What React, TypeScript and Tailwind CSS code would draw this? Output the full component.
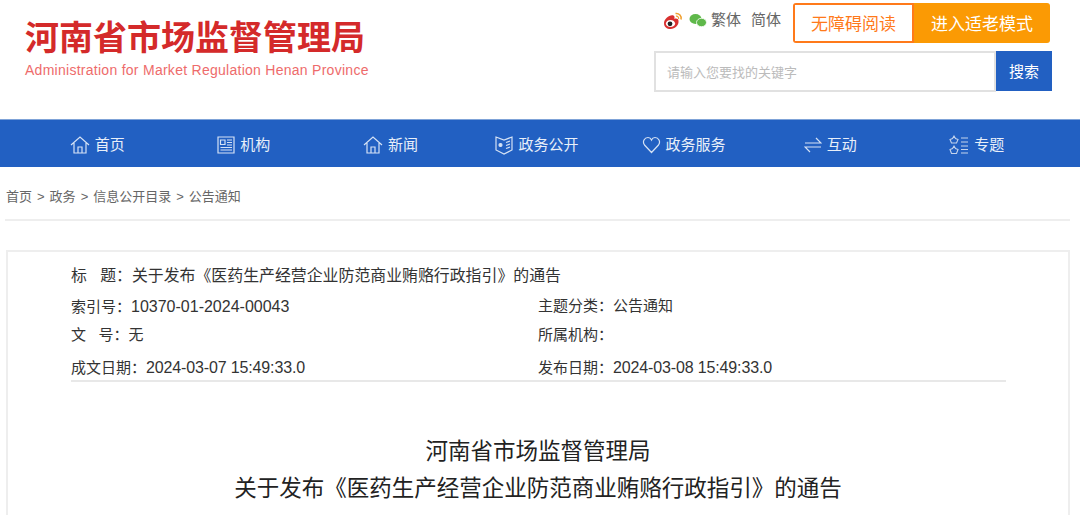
import type { ReactNode } from "react";

const navItems = ["首页", "机构", "新闻", "政务公开", "政务服务", "互动", "专题"];

function HomeIcon() {
  return (
    <svg width="20" height="20" viewBox="0 0 20 20" fill="none" stroke="#d5e2f5" strokeWidth="1.2">
      <path d="M1 10 L10 2 L19 10 M4 8 V18 H16 V8 M8 18 V12 H12 V18" />
    </svg>
  );
}

function NewsIcon() {
  return (
    <svg width="18" height="18" viewBox="0 0 18 18" fill="none" stroke="#d5e2f5" strokeWidth="1.2">
      <path d="M1 1 H17 V17 H1 Z M3.5 4 H8 V8.5 H3.5 Z M10 4 H15 M10 6.5 H15 M10 9 H15 M3.5 11.5 H15 M3.5 14 H15" />
    </svg>
  );
}

function BookIcon() {
  return (
    <svg width="18" height="20" viewBox="0 0 18 20" fill="none" stroke="#d5e2f5" strokeWidth="1.2">
      <path d="M1 2 L9 5 L17 2 V15 L9 19 L1 15 Z M11 7.5 L15 6 M11 10.5 L15 9 M11 13.5 L15 12" />
      <circle cx="5.5" cy="10" r="1.5" fill="#d5e2f5" />
    </svg>
  );
}

function HeartIcon() {
  return (
    <svg width="19" height="18" viewBox="0 0 19 18" fill="none" stroke="#d5e2f5" strokeWidth="1.2">
      <path d="M9.5 16.5 L2.5 9 C0 5.5 2.5 1.5 6 1.5 C7.8 1.5 9 2.8 9.5 4 C10 2.8 11.2 1.5 13 1.5 C16.5 1.5 19 5.5 16.5 9 Z" />
    </svg>
  );
}

function SwapIcon() {
  return (
    <svg width="18" height="18" viewBox="0 0 18 18" fill="none" stroke="#d5e2f5" strokeWidth="1.2">
      <path d="M1 7 H17 L12 2 M17 11 H1 L6 16" />
    </svg>
  );
}

function TopicIcon() {
  return (
    <svg width="20" height="20" viewBox="0 0 20 20" fill="none" stroke="#c3d3ec" strokeWidth="1.1">
      <path d="M5 1 L6.5 3.5 L9 4.5 L7.5 8 H2.5 L1 4.5 L3.5 3.5 Z M5 11 L6.5 13.5 L9 14.5 L7.5 18.5 H2.5 L1 14.5 L3.5 13.5 Z" />
      <path d="M12 3 H19 M12 7 H19 M12 11 H19 M12 14.5 H19 M12 18 H19" />
    </svg>
  );
}

const navIcons = [<HomeIcon />, <NewsIcon />, <HomeIcon />, <BookIcon />, <HeartIcon />, <SwapIcon />, <TopicIcon />];

function WeiboIcon() {
  return (
    <svg width="20" height="18" viewBox="0 0 20 18">
      <path d="M1 11 C1 7 7 2 10.5 3.5 C12 4.2 11.5 6 11.3 7 C13 6 15.5 6.5 15.5 9 C16 13 12 17 7.5 17 C4 17 1 15 1 11 Z" fill="#d8302f" />
      <ellipse cx="7.5" cy="11.5" rx="4.6" ry="3.6" fill="#fff" />
      <circle cx="7" cy="11.8" r="2.4" fill="#222" />
      <path d="M12.5 1.5 C16 1 19 4 18 7.5" fill="none" stroke="#f0a030" strokeWidth="1.6" />
      <path d="M13 4.2 C14.6 3.9 16 5.2 15.6 7" fill="none" stroke="#f0a030" strokeWidth="1.2" />
    </svg>
  );
}

function WechatIcon() {
  return (
    <svg width="18" height="15" viewBox="0 0 18 15">
      <ellipse cx="6.5" cy="6" rx="6" ry="5" fill="#5fb84a" />
      <ellipse cx="12.5" cy="9.5" rx="5" ry="4.2" fill="#5fb84a" stroke="#fff" strokeWidth="0.8" />
    </svg>
  );
}

function MetaCell({ children }: { children: ReactNode }) {
  return <div className="w-[467px]">{children}</div>;
}

export default function App() {
  return (
    <div className="h-[515px] w-[1080px] overflow-hidden bg-white font-['Liberation_Sans','Noto_Sans_CJK_SC',sans-serif]">
      {/* Header */}
      <header className="flex h-[119px] justify-between">
        <div className="pl-[25px] pt-[18px]">
          <div className="text-[34px] font-bold leading-[40px] text-[#d42a2a]">河南省市场监督管理局</div>
          <div className="mt-[4px] text-[14px] leading-[17px] tracking-[0.27px] text-[#ee6b6b]">
            Administration for Market Regulation Henan Province
          </div>
        </div>
        <div className="w-[426px] pt-[3px]">
          <div className="flex items-start">
            <div className="flex h-[35px] items-center pl-[9px] text-[15px] text-[#666]">
              <WeiboIcon />
              <span className="ml-[6px]"><WechatIcon /></span>
              <span className="ml-[4px]">繁体</span>
              <span className="ml-[10px]">简体</span>
            </div>
            <div className="ml-[12px] flex h-[40px] w-[257px] overflow-hidden rounded-[3px] text-[17px]">
              <div className="flex w-[121px] items-center justify-center border-2 border-[#ff7a1a] pt-[4px] text-[#ff7a1a]">无障碍阅读</div>
              <div className="flex flex-1 items-center justify-center bg-[#fb9a04] pt-[4px] text-white">进入适老模式</div>
            </div>
          </div>
          <div className="mt-[8px] flex">
            <div className="flex h-[41px] w-[342px] items-center border-2 border-[#e1e1e1] pl-[11px] pt-[2px] text-[13px] text-[#bbb]">请输入您要找的关键字</div>
            <div className="flex h-[40px] w-[56px] items-center justify-center bg-[#2260c2] pt-[2px] text-[15px] text-white">搜索</div>
          </div>
        </div>
      </header>

      {/* Nav */}
      <nav className="grid h-[48px] grid-cols-7 border-t border-[#7fa3d8] bg-[#2260c2] pl-[24px] pr-[30px] pt-[3px] text-[15px] text-[#e8eff9]">
        {navItems.map((item, i) => (
          <div key={item} className="flex items-center justify-center gap-[5px]">
            {navIcons[i]}
            <span>{item}</span>
          </div>
        ))}
      </nav>

      {/* Breadcrumb */}
      <div className="ml-[5px] mr-[10px] flex h-[54px] items-center gap-[5px] border-b-2 border-[#eee] pl-px pt-[8px] text-[13px] text-[#666]">
        <span>首页</span><span>&gt;</span><span>政务</span><span>&gt;</span><span>信息公开目录</span><span>&gt;</span><span>公告通知</span>
      </div>

      {/* Article */}
      <div className="ml-[6px] mr-[10px] mt-[29px] h-[300px] border-x-2 border-t-2 border-[#eee] pt-[10px]">
        <div className="ml-[63px] mr-[62px] border-b-2 border-[#e8e8e8] text-[15px] text-[#333]">
          <div className="flex h-[28px] items-center text-[15.9px]">{"标\u00a0\u00a0\u00a0题：关于发布《医药生产经营企业防范商业贿赂行政指引》的通告"}</div>
          <div className="flex h-[31px] items-center pt-[2px]">
            <MetaCell>索引号：<span className="text-[16px]">10370-01-2024-00043</span></MetaCell>
            <MetaCell>主题分类：公告通知</MetaCell>
          </div>
          <div className="flex h-[29px] items-center">
            <MetaCell>{"文\u00a0\u00a0\u00a0号：无"}</MetaCell>
            <MetaCell>所属机构：</MetaCell>
          </div>
          <div className="flex h-[30px] items-center pt-[6px]">
            <MetaCell>成文日期：<span className="text-[16px] tracking-[-0.14px]">2024-03-07 15:49:33.0</span></MetaCell>
            <MetaCell>发布日期：<span className="text-[16px] tracking-[-0.14px]">2024-03-08 15:49:33.0</span></MetaCell>
          </div>
        </div>
        <div className="mt-[51px] text-center text-[22.5px] leading-[37px] text-[#222]">
          <div>河南省市场监督管理局</div>
          <div>关于发布《医药生产经营企业防范商业贿赂行政指引》的通告</div>
        </div>
      </div>
    </div>
  );
}
